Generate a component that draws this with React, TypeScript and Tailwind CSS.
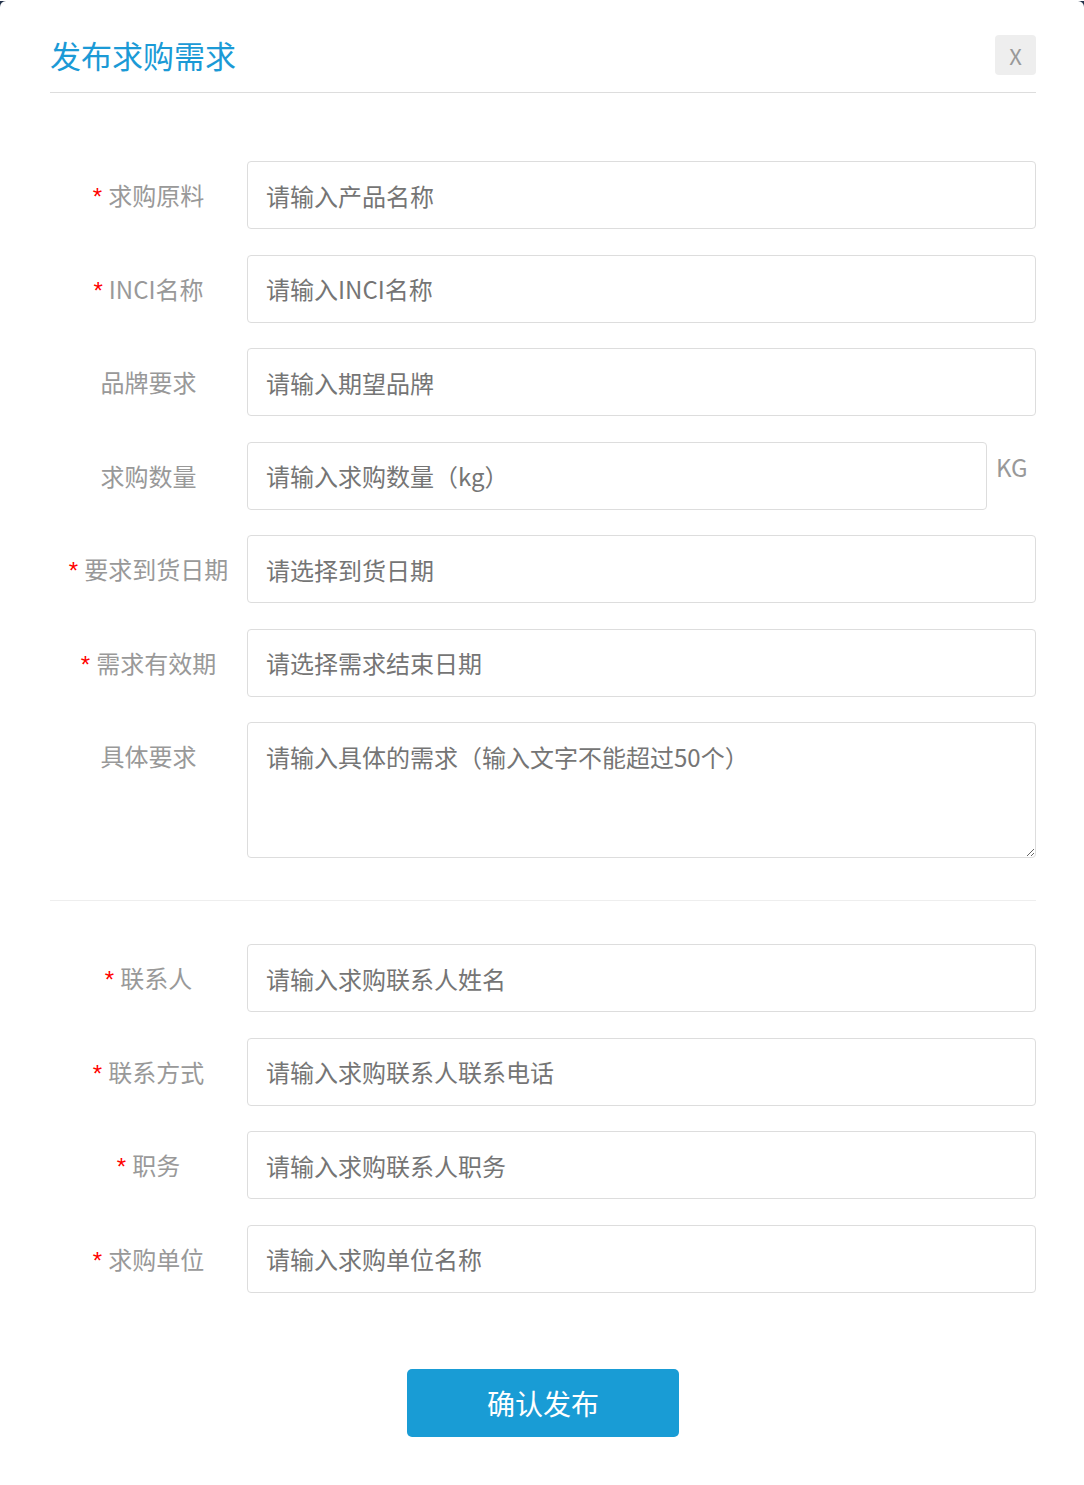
import React from "react";

const font = { fontFamily: '"Noto Sans CJK SC", "Noto Sans", sans-serif' };

type Field = { label: string; required?: boolean; placeholder: string; unit?: string };

const group1: Field[] = [
  { label: "求购原料", required: true, placeholder: "请输入产品名称" },
  { label: "INCI名称", required: true, placeholder: "请输入INCI名称" },
  { label: "品牌要求", placeholder: "请输入期望品牌" },
  { label: "求购数量", placeholder: "请输入求购数量（kg）", unit: "KG" },
  { label: "要求到货日期", required: true, placeholder: "请选择到货日期" },
  { label: "需求有效期", required: true, placeholder: "请选择需求结束日期" },
];

const group2: Field[] = [
  { label: "联系人", required: true, placeholder: "请输入求购联系人姓名" },
  { label: "联系方式", required: true, placeholder: "请输入求购联系人联系电话" },
  { label: "职务", required: true, placeholder: "请输入求购联系人职务" },
  { label: "求购单位", required: true, placeholder: "请输入求购单位名称" },
];

const Label = ({ text, required }: { text: string; required?: boolean }) => (
  <div className="w-[197px] shrink-0 h-[68px] flex items-center justify-center text-[24px] text-[#999]">
    {required && (
      <span
        className="text-[#f00] text-[24px] leading-[24px] mr-[6px] relative top-[2px]"
        style={{ fontFamily: '"Liberation Sans", Arial, sans-serif' }}
      >
        *
      </span>
    )}
    <span>{text}</span>
  </div>
);

const Row = ({ f }: { f: Field }) => (
  <div className="flex">
    <Label text={f.label} required={f.required} />
    <input
      placeholder={f.placeholder}
      className="flex-1 min-w-0 h-[68px] border border-[#ddd] rounded-[4px] pl-[18px] text-[24px] text-[#555] placeholder:text-[#757575] outline-none"
    />
    {f.unit && (
      <div className="w-[49px] shrink-0 pl-[9px] mt-[11px] leading-[28px] text-[24px] text-[#999]">
        {f.unit}
      </div>
    )}
  </div>
);

export default function App() {
  return (
    <div className="h-[1485px] bg-[#22324a]" style={font}>
      <div className="h-[1484px] mt-[1px] bg-white rounded-t-[6px] pl-[50px] pr-[48px]">
        {/* header */}
        <div className="pt-[34px] pb-[17px] flex items-center justify-between border-b border-[#ddd]">
          <h1 className="text-[31px] leading-[40px] text-[#1b9ad6]">发布求购需求</h1>
          <button className="w-[41px] h-[40px] bg-[#eeeeee] rounded-[4px] text-[22px] text-[#999]">
            X
          </button>
        </div>

        {/* product info */}
        <div className="pt-[68px] flex flex-col gap-[25.5px]">
          {group1.map((f) => (
            <Row key={f.label} f={f} />
          ))}
          <div className="flex">
            <Label text="具体要求" />
            <textarea
              placeholder="请输入具体的需求（输入文字不能超过50个）"
              className="flex-1 h-[136px] border border-[#ddd] rounded-[4px] pl-[18px] pt-[19px] leading-[30px] text-[24px] text-[#555] placeholder:text-[#757575] outline-none"
            />
          </div>
        </div>

        <div className="mt-[42px] border-t border-[#eee]"></div>

        {/* contact info */}
        <div className="pt-[43px] flex flex-col gap-[25.5px]">
          {group2.map((f) => (
            <Row key={f.label} f={f} />
          ))}
        </div>

        <div className="flex justify-center pt-[76px]">
          <button className="w-[272px] h-[68px] bg-[#199cd5] rounded-[5px] text-white text-[28px]">
            确认发布
          </button>
        </div>
      </div>
    </div>
  );
}
